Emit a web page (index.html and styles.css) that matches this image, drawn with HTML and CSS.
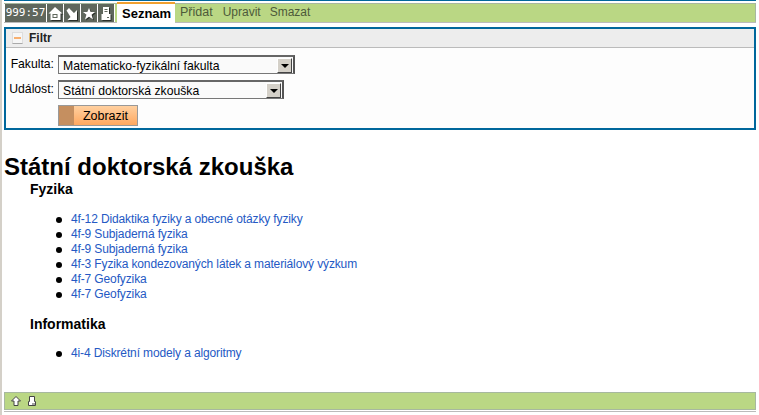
FILE: index.html
```html
<!DOCTYPE html>
<html lang="cs">
<head>
<meta charset="utf-8">
<title>Seznam</title>
<link rel="stylesheet" href="styles.css">
</head>
<body>
<div class="page">
  <nav class="topbar">
    <div class="tools">
      <span class="timer">999:57</span>
      <a class="tool"><svg width="16" height="17" viewBox="0 0 16 17"><path d="M8 2 1.500 8.500h2V15h10V8.500h2L8 2z" fill="#fff"/><rect x="5.500" y="9" width="5" height="4" fill="#5f675d"/><rect x="6.500" y="10" width="3" height="2" fill="#fff"/></svg></a>
      <a class="tool"><svg width="16" height="17" viewBox="0 0 16 17"><path d="M2.500 5.500 5 3l5 5 3-3v10H3.500l3-3z" fill="#fff"/></svg></a>
      <a class="tool"><svg width="16" height="17" viewBox="0 0 16 17"><path d="M8 3l1.700 4H14l-3.400 2.800L12 14.500 8 11.700 4 14.500l1.400-4.700L2 7h4.300z" fill="#fff"/></svg></a>
      <a class="tool"><svg width="16" height="17" viewBox="0 0 16 17"><path d="M5 2h6v7h1.500v6h-9V9H5z" fill="#fff"/><path d="M6.500 4h3v1h-3zm0 2h3v1h-3zM9 12h2v1H9z" fill="#5f675d"/></svg></a>
    </div>
    <a class="tab active">Seznam</a>
    <a class="tab">Přidat</a>
    <a class="tab">Upravit</a>
    <a class="tab">Smazat</a>
  </nav>

  <form class="filter">
    <div class="filter-head">
      <span class="toggle"><span class="dash"></span></span>
      <span class="filter-title">Filtr</span>
    </div>
    <div class="filter-body">
      <div class="row">
        <label class="lbl">Fakulta:</label>
        <div class="select wide"><span class="val">Matematicko-fyzikální fakulta</span><span class="arrow"></span></div>
      </div>
      <div class="row">
        <label class="lbl">Událost:</label>
        <div class="select narrow"><span class="val">Státní doktorská zkouška</span><span class="arrow"></span></div>
      </div>
      <div class="row">
        <button type="button" class="btn"><span class="btn-side"></span><span class="btn-text">Zobrazit</span></button>
      </div>
    </div>
  </form>

  <main class="content">
    <h1>Státní doktorská zkouška</h1>
    <h2>Fyzika</h2>
    <ul>
      <li><a>4f-12 Didaktika fyziky a obecné otázky fyziky</a></li>
      <li><a>4f-9 Subjaderná fyzika</a></li>
      <li><a>4f-9 Subjaderná fyzika</a></li>
      <li><a>4f-3 Fyzika kondezovaných látek a materiálový výzkum</a></li>
      <li><a>4f-7 Geofyzika</a></li>
      <li><a>4f-7 Geofyzika</a></li>
    </ul>
    <h2>Informatika</h2>
    <ul>
      <li><a>4i-4 Diskrétní modely a algoritmy</a></li>
    </ul>
  </main>

  <footer class="bottombar">
    <svg width="12" height="12" viewBox="0 0 12 12"><path d="M6 1.500 1.500 6H4v4.500h4V6h2.500z" fill="#fff" stroke="#444" stroke-width="1"/></svg>
    <svg width="12" height="12" viewBox="0 0 12 12"><path d="M3.500 1.500h5v5h1v4h-7v-4h1z" fill="#fff" stroke="#444" stroke-width="1"/><path d="M6 8.500h3v1H6z" fill="#444"/></svg>
  </footer>
</div>
</body>
</html>
```

FILE: styles.css
```css
html, body { margin: 0; padding: 0; background: #fff; }
body { font-family: "Liberation Sans", Arial, sans-serif; font-size: 12px; color: #000; height: 415px; overflow: hidden; }
.page { border-left: 2px solid #d4d0c8; padding: 0 3px 0 2px; height: 415px; box-sizing: border-box; display: flex; flex-direction: column; }
.topbar { display: flex; align-items: stretch; height: 18px; background: #bad784; border: 1px solid #a7b89f; border-left: 0; border-bottom: 0; margin-top: 3px; position: relative; }
.topbar::before { content: ""; position: absolute; left: 0; right: -1px; top: -4px; height: 1px; background: #00679c; }
.topbar::after { content: ""; position: absolute; left: 0; right: -1px; top: 18px; height: 1px; background: #bbb; }
.tools { display: flex; gap: 1px; background: #fff; padding: 0 1px; z-index: 1; }
.timer { background: #5f675d; color: #fff; font-family: "DejaVu Sans Mono", monospace; font-size: 11px; line-height: 17px; width: 41px; text-align: center; }
.tool { width: 16px; background: #5f675d; display: flex; align-items: center; justify-content: center; }
.tool svg { filter: drop-shadow(1px 1px 0 #2a2f2a); }
.tab { padding: 0 4px 0 5px; line-height: 17px; color: #4d5a3a; font-size: 12px; }
.tab.active + .tab { font-size: 12.500px; padding-right: 5px; }
.tab.active { background: #fff; color: #000; font-weight: bold; border-top: 2px solid #f0a030; margin: -2px 0 -3px 2px; font-size: 13px; line-height: 19px; padding: 0 5px; width: 48px; text-align: center; z-index: 1; }
.filter { border: 2px solid #00679c; margin-top: 5px; background: #fdfdfd; }
.filter-head { display: flex; align-items: center; gap: 6px; height: 18px; background: #ededed; border-bottom: 1px solid #bbb; padding-left: 6px; }
.toggle { width: 9px; height: 10px; background: #f6f6f6; border: 1px solid #ddd; border-bottom-color: #aaa; display: flex; align-items: center; justify-content: center; }
.dash { width: 7px; height: 2px; background: #f8b070; }
.filter-title { font-weight: bold; font-size: 12px; color: #222; }
.filter-body { padding: 7px 0 2px 0; display: flex; flex-direction: column; gap: 6px; }
.row { display: flex; padding-left: 2px; }
.lbl { width: 46px; text-align: right; margin-right: 4px; padding-top: 2px; line-height: 15px; font-size: 12.200px; }
.row .btn { margin-left: 50px; }
.select { height: 19px; border: 1px solid #777; border-top: 2px solid #666; border-right: 2px solid #555; display: flex; align-items: center; justify-content: space-between; box-sizing: border-box; padding-left: 4px; background: #fafafa; font-size: 12.200px; }
.val { padding-top: 1px; }
.wide { width: 237px; }
.narrow { width: 226px; }
.arrow { width: 15px; height: 15px; background: #d4d0c8; border: 1px solid; border-color: #fff #444 #444 #fff; box-sizing: border-box; position: relative; margin-right: 1px; }
.arrow::after { content: ""; position: absolute; left: 3px; top: 5px; border: 4px solid transparent; border-top: 4px solid #000; border-bottom: 0; }
.btn { height: 21px; width: 80px; padding: 0; border: 1px solid #999; background: linear-gradient(#ffd0a0, #ffa860); display: flex; font: inherit; font-size: 12.500px; }
.btn-side { width: 15px; height: 100%; background: #c58f60; }
.btn-text { flex: 1; line-height: 20px; text-align: center; }
.content { flex: 1; }
.content h1 { font-size: 24px; margin: 23px 0 0; line-height: 28px; }
.content h2 { font-size: 14px; margin: 0 0 0 26px; line-height: 16px; }
.content ul { margin: 15px 0 14px; padding-left: 67px; list-style: none; letter-spacing: -0.130px; }
.content ul:last-child { margin-top: 14px; }
.content li { line-height: 15px; position: relative; }
.content li::before { content: ""; position: absolute; left: -15px; top: 5px; width: 6px; height: 6px; border-radius: 50%; background: #000; }
.content a { color: #2459c4; }
.bottombar { height: 16px; margin-bottom: 5px; background: #bad784; border: 1px solid #a7b89f; display: flex; align-items: center; padding-left: 5px; gap: 4px; box-shadow: 0 1px 0 #fff, 0 2px 0 #bbb; }
```
